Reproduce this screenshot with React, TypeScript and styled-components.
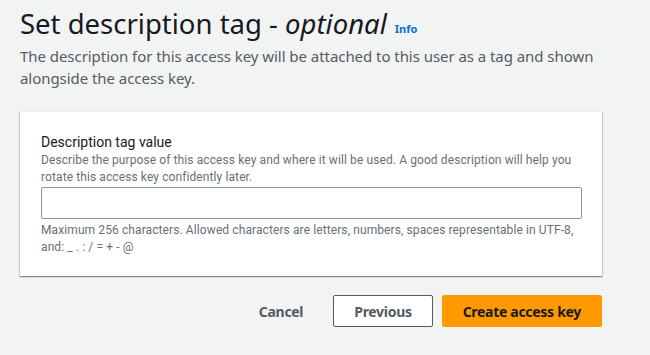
import * as React from 'react'
import styled, { createGlobalStyle } from 'styled-components'

const GlobalStyle = createGlobalStyle`
    html, body {
        margin: 0;
        padding: 0;
        background-color: #f2f3f3;
    }
    body {
        font-family: 'Noto Sans', 'Open Sans', sans-serif;
        color: #16191f;
    }
`

const Page = styled.div`
    width: 650px;
    height: 355px;
    padding: 7px 48px 0 20px;
    box-sizing: border-box;
    overflow: hidden;
`

const Header = styled.header`
    margin-bottom: 22px;
`

const Title = styled.h1`
    margin: 0;
    font-size: 27.5px;
    line-height: 33px;
    font-weight: 400;
    color: #16191f;
`

const Optional = styled.i`
    font-style: italic;
`

const InfoLink = styled.a`
    margin-left: 8px;
    font-size: 11px;
    font-weight: 700;
    color: #0972d3;
    text-decoration: none;
    cursor: pointer;
    vertical-align: 1px;
`

const Lead = styled.p`
    margin: 0;
    font-size: 15px;
    line-height: 22px;
    letter-spacing: -0.05px;
    color: #545b64;
`

const Card = styled.section`
    background: #ffffff;
    border-top: 1px solid #eaeded;
    box-shadow: 0 1px 1px 0 rgba(0, 28, 36, 0.3), 1px 1px 1px 0 rgba(0, 28, 36, 0.15),
        -1px 1px 1px 0 rgba(0, 28, 36, 0.15);
    padding: 20px 20px 20px 21px;
`

const Label = styled.label`
    display: block;
    font-family: Roboto, 'Liberation Sans', sans-serif;
    font-size: 14px;
    line-height: 20px;
    color: #16191f;
`

const Hint = styled.p`
    margin: 0;
    font-family: Roboto, 'Liberation Sans', sans-serif;
    font-size: 12px;
    line-height: 17px;
    letter-spacing: 0.1px;
    color: #687078;
`

const Input = styled.input`
    display: block;
    box-sizing: border-box;
    width: 100%;
    height: 32px;
    margin: 1px 0 3px;
    border: 1px solid #879596;
    border-radius: 2px;
    background: #ffffff;
    font-size: 14px;
    padding: 0 10px;
    outline: none;
`

const Actions = styled.div`
    display: flex;
    justify-content: flex-end;
    align-items: center;
    gap: 9px;
    margin-top: 19px;
`

const Button = styled.button<{ $variant?: 'link' | 'normal' | 'primary' }>`
    font-family: 'Noto Sans', 'Open Sans', sans-serif;
    font-size: 14px;
    font-weight: 700;
    letter-spacing: -0.3px;
    height: 32px;
    border-radius: 2px;
    cursor: pointer;
    padding: 0 20px;
    border: 1px solid
        ${p => (p.$variant === 'normal' ? '#545b64' : p.$variant === 'primary' ? '#ff9900' : 'transparent')};
    background: ${p => (p.$variant === 'primary' ? '#ff9900' : p.$variant === 'normal' ? '#ffffff' : 'transparent')};
    color: ${p => (p.$variant === 'primary' ? '#16191f' : '#545b64')};
`

export default function App() {
    return (
        <>
            <GlobalStyle />
            <Page>
                <Header>
                    <Title>
                        Set description tag - <Optional>optional</Optional>
                        <InfoLink>Info</InfoLink>
                    </Title>
                    <Lead>
                        The description for this access key will be attached to this user as a tag and shown
                        alongside the access key.
                    </Lead>
                </Header>
                <Card>
                    <Label htmlFor="desc-tag">Description tag value</Label>
                    <Hint>
                        Describe the purpose of this access key and where it will be used. A good description will
                        help you rotate this access key confidently later.
                    </Hint>
                    <Input id="desc-tag" type="text" />
                    <Hint>
                        Maximum 256 characters. Allowed characters are letters, numbers, spaces representable in
                        UTF-8, and: _ . : / = + - @
                    </Hint>
                </Card>
                <Actions>
                    <Button $variant="link">Cancel</Button>
                    <Button $variant="normal">Previous</Button>
                    <Button $variant="primary">Create access key</Button>
                </Actions>
            </Page>
        </>
    )
}
